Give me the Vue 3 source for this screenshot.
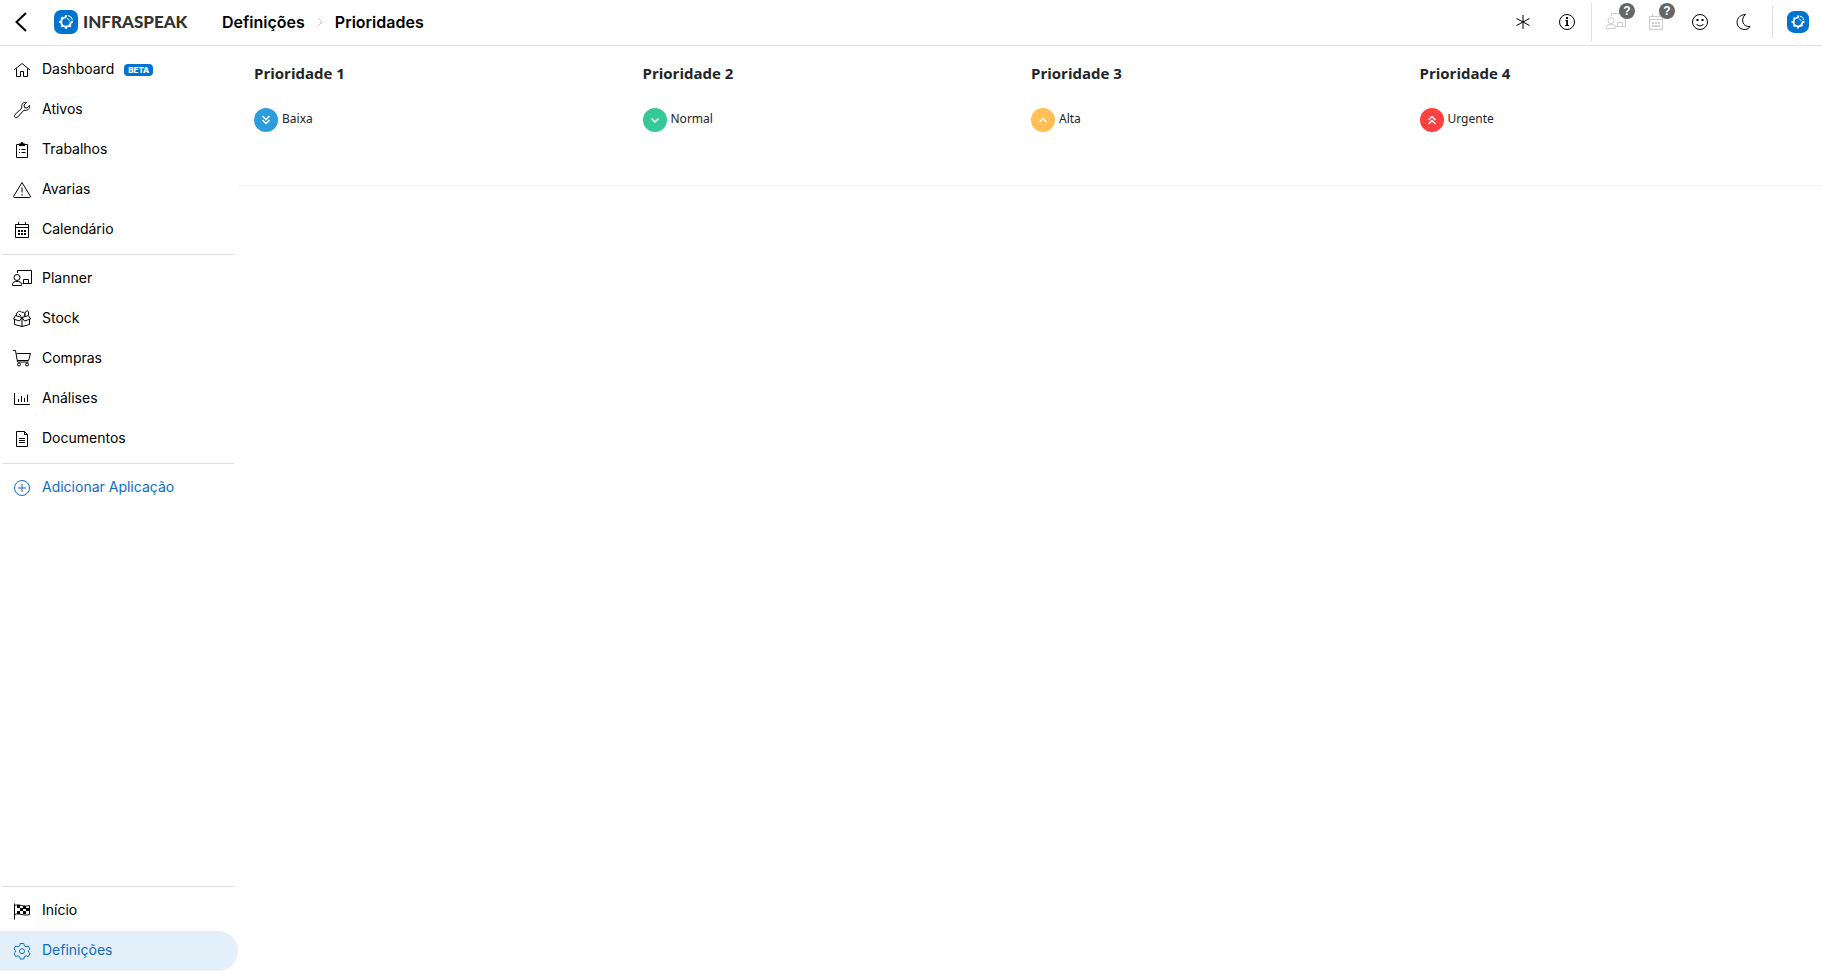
<template>
    <div class="app">
        <header class="topbar">
            <button class="back" aria-label="Voltar">
                <svg width="12" height="20" viewBox="0 0 12 20"><path d="M11 1 1.500 10 11 19" /></svg>
            </button>
            <a href="#" class="brand">
                <svg class="logo" width="24" height="24" viewBox="0 0 24 24">
                    <rect width="24" height="24" rx="7" />
                    <path class="ring" :d="logo.ring" />
                    <path class="teeth" :d="logo.teeth" />
                    <path class="waves" :d="logo.waves" />
                </svg>
                <span>INFRASPEAK</span>
            </a>
            <nav class="breadcrumb">
                <a href="#">Definições</a>
                <svg width="6" height="10" viewBox="0 0 6 10"><path d="M1 1l4 4-4 4" /></svg>
                <span>Prioridades</span>
            </nav>

            <div class="actions">
                <button v-for="a in actions" :key="a.icon" :class="{ muted: a.badge, split: a.split }" :aria-label="a.label">
                    <svg class="icon" width="20" height="20" viewBox="0 0 20 20">
                        <path :d="icons[a.icon].line" />
                        <path v-if="icons[a.icon].fill" class="solid" :d="icons[a.icon].fill" />
                    </svg>
                    <span v-if="a.badge" class="badge">?</span>
                </button>
            </div>
            <button class="account" aria-label="Conta">
                <svg class="logo" width="22" height="22" viewBox="0 0 24 24">
                    <rect width="24" height="24" rx="8" />
                    <path class="ring" :d="logo.ring" />
                    <path class="teeth" :d="logo.teeth" />
                    <path class="waves" :d="logo.waves" />
                </svg>
            </button>
        </header>

        <div class="body">
            <nav class="sidebar">
                <ul v-for="(group, i) in menu" :key="i">
                    <li v-for="item in group" :key="item.label">
                        <a href="#" :class="{ active: item.active, link: item.link }">
                            <svg class="icon" width="20" height="20" viewBox="0 0 20 20">
                                <path :d="icons[item.icon].line" />
                                <path v-if="icons[item.icon].fill" class="solid" :d="icons[item.icon].fill" />
                            </svg>
                            <span>{{ item.label }}</span>
                            <span v-if="item.beta" class="beta">BETA</span>
                        </a>
                    </li>
                </ul>
            </nav>

            <main>
                <section class="priorities">
                    <div v-for="(p, i) in priorities" :key="p.name" class="priority">
                        <h2>Prioridade {{ i + 1 }}</h2>
                        <p>
                            <svg class="level" :class="p.color" width="24" height="24" viewBox="0 0 24 24">
                                <circle cx="12" cy="12" r="12" />
                                <path :d="p.arrow" />
                            </svg>
                            <span>{{ p.name }}</span>
                        </p>
                    </div>
                </section>
            </main>
        </div>
    </div>
</template>

<script setup>
const logo = {
    ring: 'M12 7.200A4.800 4.800 0 1 0 16.800 12',
    teeth: 'M12 16.500v2.500M7.500 12H5M8.800 8.800 7.200 7.200M8.800 15.200l-1.600 1.600M15.200 15.200l1.600 1.600M16.500 12H19M12 7.500V5',
    waves: 'M13 8.500a3 3 0 0 1 2.500 2.500M13.800 5.500a5.500 5.500 0 0 1 4.700 4.700',
};

const icons = {
    home: { line: 'M2 10 10 3.500 18 10M4.500 8.500v8h4v-5h3v5h4v-8' },
    wrench: { line: 'M17.500 5.500 15 8l-2.500-.5L12 5l2.500-2.500C12 1.800 9.500 3.500 9.700 6.500L9.900 8 3 14.500c-2 2 .8 4.500 2.600 2.600L12 10.200c3.500.8 6.300-1.500 5.500-4.700z' },
    clipboard: { line: 'M4.500 4.500h11v13h-11zM9.500 9.500h4M9.500 12.500h4M7 9.500h1M7 12.500h1', fill: 'M7 6V3.500h1.500a1.500 1.500 0 0 1 3 0H13V6z' },
    warning: { line: 'M10 2.500 1.500 16.500q0 1 1 1h15q1 0 1-1zM10 7.500v5M10 14v1.500' },
    calendar: { line: 'M3.500 4.500h13v13h-13zM3.500 7.500h13M6.500 2v2.500M13.500 2v2.500', fill: 'M6 10h2v2H6zM9 10h2v2H9zM12 10h2v2h-2zM6 13h2v2H6zM9 13h2v2H9zM12 13h2v2h-2z' },
    planner: { line: 'M5.500 4V1.500h14v13h-9M11.500 14v-3.500h5v4M8 8.500a3 3 0 1 1-6 0a3 3 0 1 1 6 0M.5 16.500v-1q0-3 3-3h3q3 0 3 3v1z' },
    box: { line: 'M2.500 10v5.500L10 17.500l7.500-2V10M10 8.500v9M3.500 6.500 10 8.500l6.500-2 2 3.500-6 2L10 8.500 7.500 12l-6-2zM4.500 6.500c-.5-4 4-5.500 5.500-3 2.500-1 3.500 1 2 4M13 7c-1-4 2.500-7 3.500-4V6M7 5l2 2' },
    cart: { line: 'M1 1.500h2.500l2 11.500h11M4.500 4.500h14l-2 7H5.500M8.500 15.500a1.500 1.500 0 1 1-3 0a1.500 1.500 0 1 1 3 0M16.500 15.500a1.500 1.500 0 1 1-3 0a1.500 1.500 0 1 1 3 0' },
    chart: { line: 'M2.500 4v11.500H18M6.500 10v3M9.500 7v6M12.500 9v4M15.500 5.500V13' },
    document: { line: 'M4.500 2.500h8l3 3v12h-11zM12.500 2.500v3h3M7 9.500h6M7 11.500h6M7 13.500h6' },
    plus: { line: 'M17.500 10a7.500 7.500 0 1 1-15 0a7.500 7.500 0 1 1 15 0M10 6v8M6 10h8' },
    flag: {
        line: 'M2.500 2.500v16M2.500 4.500c5-2 9 2 15 0v9c-6 2-10-2-15 0',
        fill: 'M5 4h3v3H5zM11 5h3v3h-3zM8 7h3v3H8zM14 7h3v3h-3zM5 10h3v3H5zM11 10h3v3h-3z',
    },
    gear: { line: 'M8.200 2.500h3.600l.5 2.300 1.800 1 2.200-.8 1.700 3-1.600 1.500v1.500l1.600 1.500-1.700 3-2.200-.7-1.800 1-.5 2.200H8.200l-.5-2.200-1.800-1-2.200.7-1.700-3L3.600 11V9.500L2 8l1.700-3 2.200.8 1.800-1zM12.500 10.200a2.500 2.500 0 1 1-5 0a2.500 2.500 0 1 1 5 0' },
    asterisk: { line: 'M10 3v14M3.500 6.500l13 7M16.500 6.500l-13 7' },
    info: { line: 'M17.500 10a7.500 7.500 0 1 1-15 0a7.500 7.500 0 1 1 15 0M8.500 8.500H10v5M8 13.500h4', fill: 'M9 5h2v2H9zM9.500 8h1.500v6H9.500z' },
    smile: { line: 'M17.500 10a7.500 7.500 0 1 1-15 0a7.500 7.500 0 1 1 15 0M6.500 12c1.500 2.500 5.500 2.500 7 0', fill: 'M6.500 7h2v2h-2zM11.500 7h2v2h-2z' },
    moon: { line: 'M11.500 2.500C0 3 .5 18 11.500 17.500q3 0 4.500-3C8 15.500 6.500 6 11.500 2.500z' },
};

const actions = [
    { icon: 'asterisk', label: 'Novidades' },
    { icon: 'info', label: 'Ajuda' },
    { icon: 'planner', label: 'Planner', badge: true, split: true },
    { icon: 'calendar', label: 'Calendário', badge: true },
    { icon: 'smile', label: 'Feedback' },
    { icon: 'moon', label: 'Modo escuro' },
];

const menu = [
    [
        { icon: 'home', label: 'Dashboard', beta: true },
        { icon: 'wrench', label: 'Ativos' },
        { icon: 'clipboard', label: 'Trabalhos' },
        { icon: 'warning', label: 'Avarias' },
        { icon: 'calendar', label: 'Calendário' },
    ],
    [
        { icon: 'planner', label: 'Planner' },
        { icon: 'box', label: 'Stock' },
        { icon: 'cart', label: 'Compras' },
        { icon: 'chart', label: 'Análises' },
        { icon: 'document', label: 'Documentos' },
    ],
    [{ icon: 'plus', label: 'Adicionar Aplicação', link: true }],
    [
        { icon: 'flag', label: 'Início' },
        { icon: 'gear', label: 'Definições', active: true },
    ],
];

const priorities = [
    { name: 'Baixa', color: 'blue', arrow: 'M8.500 8l3.500 3.500L15.500 8M8.500 12l3.500 3.500 3.500-3.500' },
    { name: 'Normal', color: 'green', arrow: 'M8.500 10.500 12 14l3.500-3.500' },
    { name: 'Alta', color: 'yellow', arrow: 'M8.500 14l3.500-3.500 3.500 3.500' },
    { name: 'Urgente', color: 'red', arrow: 'M8.500 12 12 8.500l3.500 3.500M8.500 16l3.500-3.500 3.500 3.500' },
];
</script>

<style>
body { margin: 0; background: #fff; }
</style>

<style scoped>
.app { display: flex; flex-direction: column; min-height: 100vh; font-family: "Noto Sans", sans-serif; color: #212529; }
button { display: flex; align-items: center; justify-content: center; padding: 0; border: 0; background: none; cursor: pointer; color: inherit; }
a { color: inherit; text-decoration: none; }
svg { display: block; flex: none; fill: none; stroke: currentColor; }
.icon .solid { fill: currentColor; stroke: none; }

.topbar { display: flex; align-items: center; box-sizing: border-box; height: 46px; padding: 0 13px 2px 15px; border-bottom: 1px solid #e0e0e0; color: #000; }
.back svg { stroke-width: 2; }
.brand { display: flex; align-items: center; gap: 5px; width: 168px; margin-left: 27px; font-family: Lato, sans-serif; font-size: 17px; font-weight: 900; color: #333; }
.logo { stroke: #fff; stroke-width: 2; }
.logo rect { fill: #0073d1; stroke: none; }
.logo .waves { stroke-width: 1; }
.breadcrumb { display: flex; align-items: center; gap: 12px; font-family: Inter, sans-serif; font-size: 16px; font-weight: 600; }
.breadcrumb svg { stroke: #c4c8ce; }
.actions { display: flex; margin-left: auto; }
.actions button { position: relative; width: 44px; height: 40px; }
.actions .muted { width: 40px; color: #ccc; }
.actions .split { margin-left: 2px; padding-left: 4px; box-sizing: content-box; border-left: 1px solid #e0e0e0; }
.actions .muted + button:not(.muted) { margin-left: 2px; }
.badge { position: absolute; top: 1px; right: 1px; width: 16px; height: 16px; border-radius: 8px; background: #666; color: #fff; font-size: 12px; font-weight: 700; line-height: 16px; text-align: center; }
.account { height: 32px; margin-left: 6px; padding-left: 14px; border-left: 1px solid #e0e0e0; }

.body { display: flex; flex: 1; }
.sidebar { display: flex; flex-direction: column; width: 238px; box-sizing: border-box; padding-bottom: 3px; font-family: Inter, sans-serif; font-size: 14px; color: #000; }
.sidebar ul { list-style: none; margin: 0; padding: 4px 0; }
.sidebar ul:last-child { margin-top: auto; padding-bottom: 0; }
.sidebar ul + ul::before { content: ""; display: block; height: 1px; margin: 0 4px 4px 2px; background: #e0e0e0; }
.sidebar ul + ul { padding-top: 0; }
.sidebar a { display: flex; align-items: center; gap: 10px; height: 40px; padding-left: 12px; }
.sidebar a span { line-height: 20px; padding-bottom: 2px; }
.sidebar .link { color: #0f6bc9; }
.sidebar .active { border-radius: 0 20px 20px 0; background: #e3f0fa; color: #0f6bc9; }
.sidebar a .beta { padding: 0 4px; border-radius: 4px; background: #0073d1; color: #fff; font-size: 8px; font-weight: 800; line-height: 12px; }

main { flex: 1; }
.priorities { display: grid; grid-template-columns: repeat(4, 1fr); box-sizing: border-box; height: 140px; padding: 16px 14px 0 16px; border-bottom: 1px solid #f2f2f2; }
.priority h2 { margin: 0; font-family: "Open Sans", sans-serif; font-size: 15px; font-weight: 700; line-height: 22px; }
.priority p { display: flex; gap: 4px; margin: 24px 0 0; font-size: 12px; line-height: 22px; }
.level { stroke: #fff; stroke-width: 2; }
.level path { stroke-width: 1.500; }
.level circle { stroke: none; }
.blue circle { fill: #2d9cdb; }
.green circle { fill: #34c997; }
.yellow circle { fill: #ffbf55; }
.red circle { fill: #ff4040; }
</style>
